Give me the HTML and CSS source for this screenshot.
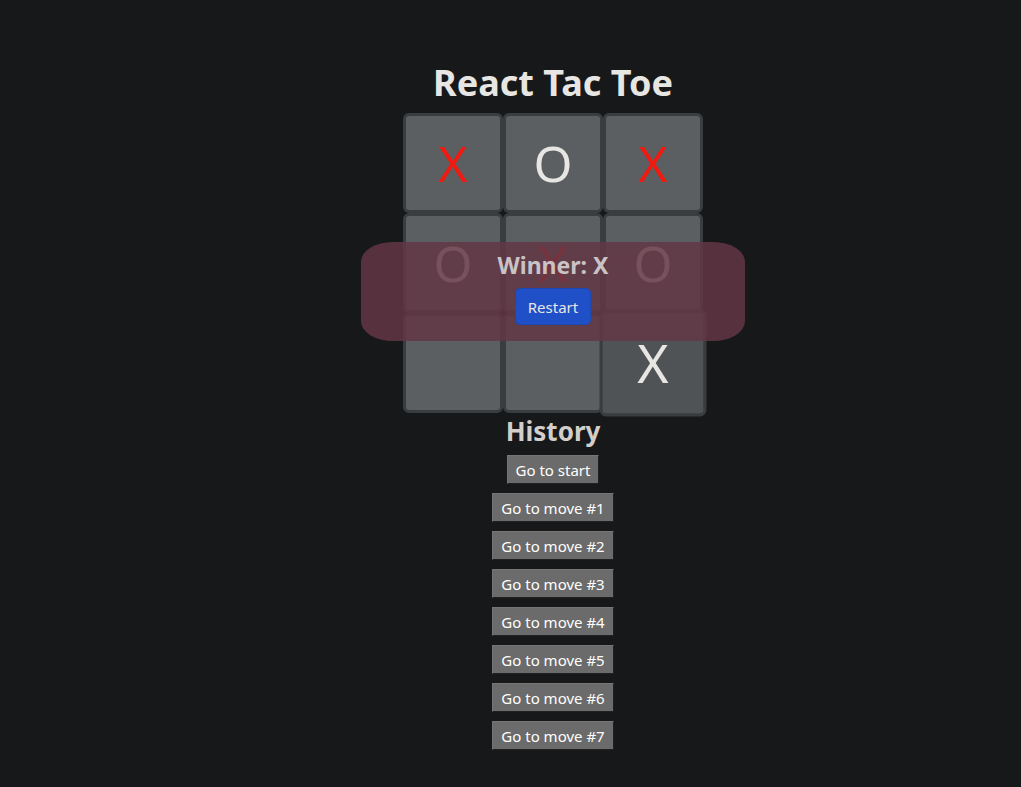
FILE: index.html
```html
<!DOCTYPE html>
<html>
<head>
<meta charset="utf-8">
<link rel="stylesheet" href="styles.css">
</head>
<body>
<div class="app">
  <h1 class="title">React Tac Toe</h1>
  <div class="board-wrap">
    <div class="board">
      <div class="cell x">X</div>
      <div class="cell o">O</div>
      <div class="cell x">X</div>
      <div class="cell o">O</div>
      <div class="cell x">X</div>
      <div class="cell o">O</div>
      <div class="cell"></div>
      <div class="cell"></div>
      <div class="cell o hover">X</div>
    </div>
    <div class="overlay">
      <div class="winner">Winner: X</div>
      <button class="restart">Restart</button>
    </div>
  </div>
  <h2 class="history-title">History</h2>
  <ol class="history">
    <li><button class="move">Go to start</button></li>
    <li><button class="move">Go to move #1</button></li>
    <li><button class="move">Go to move #2</button></li>
    <li><button class="move">Go to move #3</button></li>
    <li><button class="move">Go to move #4</button></li>
    <li><button class="move">Go to move #5</button></li>
    <li><button class="move">Go to move #6</button></li>
    <li><button class="move">Go to move #7</button></li>
  </ol>
</div>
</body>
</html>
```

FILE: styles.css
```css
html, body {
  margin: 0;
  padding: 0;
  background: #161819;
}
body {
  font-family: "Noto Sans", "Open Sans", sans-serif;
  color: #e8e6e3;
}
.app {
  display: flex;
  flex-direction: column;
  align-items: center;
  padding-top: 61px;
  padding-left: 85px;
}
.title {
  margin: 0 0 8px;
  font-size: 36px;
  line-height: 44px;
  font-weight: 700;
  color: #e8e6e3;
}
.board-wrap {
  position: relative;
}
.board {
  display: grid;
  grid-template-columns: repeat(3, 100px);
  grid-template-rows: repeat(3, 100px);
}
.cell {
  box-sizing: border-box;
  border: 3px solid #3a3d40;
  border-radius: 6px;
  background: #5b5f62;
  display: flex;
  align-items: center;
  justify-content: center;
  font-size: 50px;
  line-height: 1;
  font-weight: 400;
  color: #e8e6e3;
}
.cell.x {
  color: #f01a10;
}
.cell.o {
  color: #e8e6e3;
}
.cell.hover {
  background: #4f5356;
  transform: scale(1.07);
}
.overlay {
  position: absolute;
  z-index: 2;
  left: -42px;
  top: 129px;
  width: 384px;
  height: 99px;
  border-radius: 32px / 20px;
  background: rgba(99, 55, 69, 0.85);
  display: flex;
  flex-direction: column;
  align-items: center;
}
.winner {
  margin-top: 8px;
  font-size: 23px;
  line-height: 30px;
  font-weight: 700;
  color: #c9c3c6;
}
.restart {
  margin-top: 8px;
  height: 37px;
  padding: 0 12px;
  border: 1px solid #1c48b4;
  border-radius: 5px;
  background: #1f50c8;
  color: #e8e6e3;
  font-family: "Noto Sans", "Open Sans", sans-serif;
  font-size: 15px;
}
.history-title {
  margin: 2px 0 8px;
  font-size: 26px;
  line-height: 32px;
  font-weight: 700;
  color: #d3cec9;
}
.history {
  list-style: none;
  margin: 0;
  padding: 0;
  display: flex;
  flex-direction: column;
  align-items: center;
  gap: 9px;
}
.move {
  height: 29px;
  padding: 0 8px;
  border: 1px outset #757575;
  border-radius: 0;
  background: #6b6b6b;
  color: #ffffff;
  font-family: "Noto Sans", "Open Sans", sans-serif;
  font-size: 15px;
}
```
